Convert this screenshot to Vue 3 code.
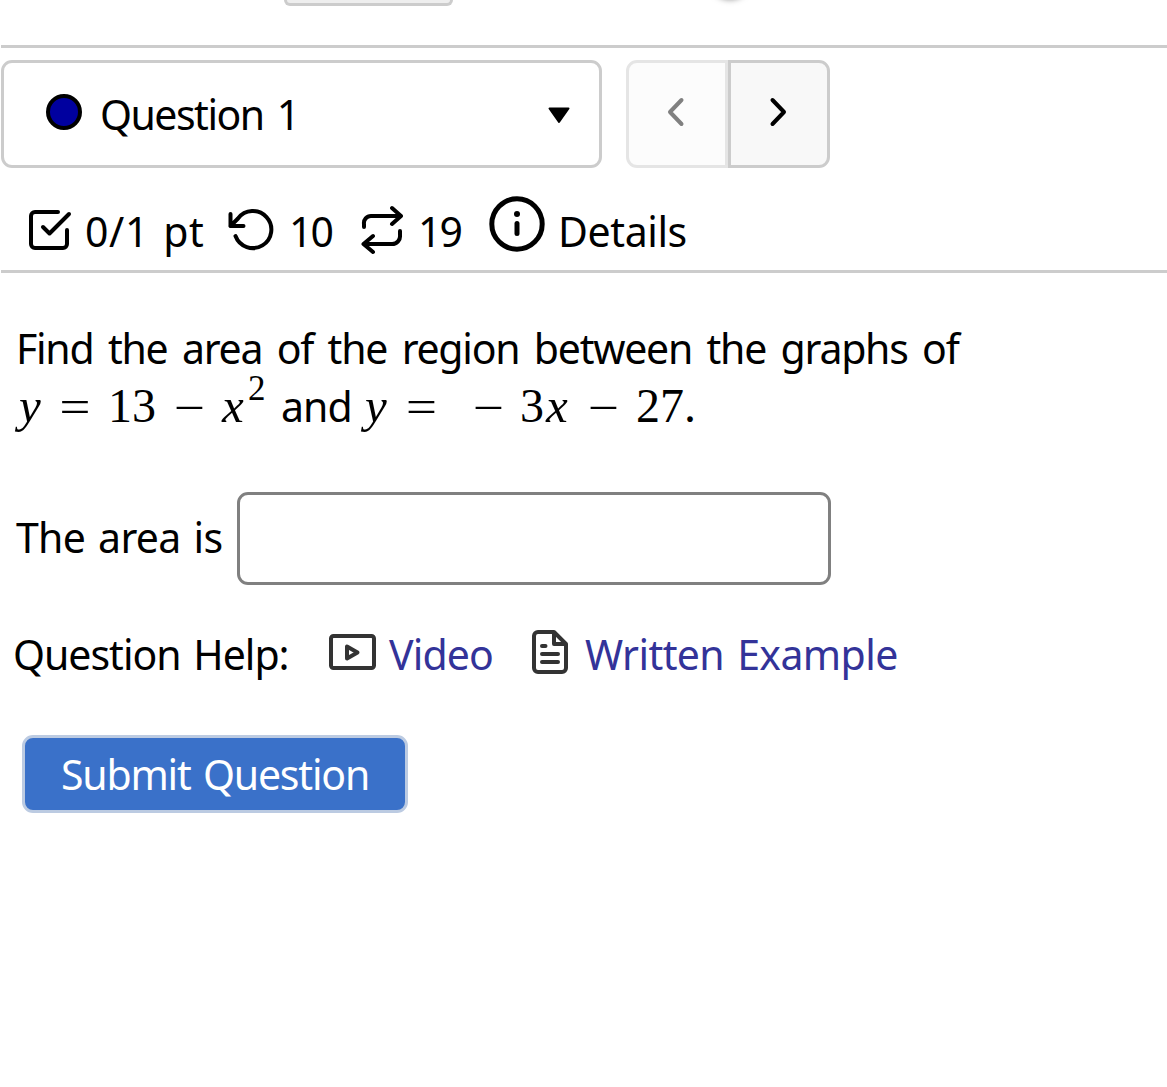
<template>
  <div class="page">
    <header class="top-strip">
      <div class="top-button"></div>
      <div class="top-knob"></div>
    </header>

    <nav class="question-nav">
      <button class="question-select">
        <span class="status-dot"></span>
        <span class="text select-label">Question 1</span>
        <svg class="caret" width="22" height="17" viewBox="0 0 22 17">
          <path d="M1.5 1.5h19L11 15z" fill="#000" stroke="#000" stroke-width="2" stroke-linejoin="round" />
        </svg>
      </button>
      <div class="pager">
        <button class="pager-button prev" disabled title="Previous">
          <svg width="20" height="30" viewBox="0 0 20 30">
            <path d="M15.5 3 4 15l11.500 12" />
          </svg>
        </button>
        <button class="pager-button next" title="Next">
          <svg width="20" height="30" viewBox="0 0 20 30">
            <path d="M4.500 3 16 15 4.500 27" />
          </svg>
        </button>
      </div>
    </nav>

    <section class="stats">
      <svg class="icon" width="44" height="42" viewBox="0 0 44 42">
        <path d="M30 3H7a4 4 0 0 0-4 4v28a4 4 0 0 0 4 4h28a4 4 0 0 0 4-4V21M15 18l6.500 6.500L41 5" />
      </svg>
      <span class="text score">0/1 pt</span>
      <svg class="icon" width="46" height="42" viewBox="0 0 46 42">
        <path d="M2.500 5v12h13M2.500 17 10 9.500A18.500 18.500 0 1 1 7.500 27" />
      </svg>
      <span class="text attempts">10</span>
      <svg class="icon" width="42" height="50" viewBox="0 0 42 50">
        <path d="M3 22v-3a7 7 0 0 1 7-8h30M31 3 40 11l-9 8M39 26v4a8 8 0 0 1-8 9H2.500M12 31l-9.500 8L12 47" />
      </svg>
      <span class="text versions">19</span>
      <svg class="icon info" width="56" height="56" viewBox="0 0 56 56">
        <circle cx="28" cy="28" r="25.200" />
        <path d="M28 27.500v10" />
        <circle class="info-dot" cx="28" cy="18" r="3" />
      </svg>
      <span class="text details">Details</span>
    </section>

    <main class="question">
      <p class="text prompt">Find the area of the region between the graphs of</p>
      <p class="equation">
        <i class="y">y</i><span class="op eq">=</span><span class="n13">13</span><span class="op minus">−</span><i class="x">x</i><sup>2</sup><span class="text and">and</span><i class="y">y</i><span class="op eq2">=</span><span class="op neg">−</span><span class="n3">3</span><i class="x2">x</i><span class="op minus2">−</span><span class="n27">27.</span>
      </p>

      <div class="answer">
        <label class="text answer-label" for="area">The area is</label>
        <input id="area" v-model="answer" type="text" />
      </div>

      <div class="help">
        <span class="text help-label">Question Help:</span>
        <svg class="icon help-icon" width="48" height="38" viewBox="0 0 48 38">
          <rect x="3" y="3" width="43" height="32" rx="2.500" />
          <path d="M19 13.500v12l10.500-6z" />
        </svg>
        <a class="text video">Video</a>
        <svg class="icon help-icon" width="38" height="46" viewBox="0 0 38 46">
          <path d="M23 3H7a4 4 0 0 0-4 4v32a4 4 0 0 0 4 4h24a4 4 0 0 0 4-4V15zM23 3v12h12M11 17h3.500M11 25h16M11 33h16" />
        </svg>
        <a class="text written">Written Example</a>
      </div>

      <button class="submit"><span class="text">Submit Question</span></button>
    </main>
  </div>
</template>

<script setup>
import { ref } from 'vue'

const answer = ref('')
</script>

<style>
body {
  margin: 0;
  background: #fff;
}
</style>

<style scoped>
* {
  box-sizing: border-box;
}

.page {
  height: 1087px;
  overflow: hidden;
  padding-left: 1px;
  color: #000;
}

button {
  margin: 0;
  padding: 0;
}

.text {
  font-family: "Noto Sans", sans-serif;
  font-size: 41px;
  line-height: 58px;
  letter-spacing: -0.9px;
  word-spacing: 3px;
  white-space: nowrap;
  flex: none;
}

.top-strip {
  display: flex;
  align-items: flex-start;
  height: 48px;
  padding-left: 283px;
  border-bottom: 3px solid #ccc;
}

.top-button {
  width: 169px;
  height: 6px;
  border: 3px solid #ccc;
  border-top: 0;
  border-radius: 0 0 10px 10px;
  background: #eee;
}

.top-knob {
  width: 40px;
  height: 40px;
  margin: -42px 0 0 257px;
  border-radius: 50%;
  box-shadow: 0 1px 6px rgba(0, 0, 0, 0.5);
}

.question-nav {
  display: flex;
  gap: 24px;
  margin-top: 12px;
  height: 108px;
}

.question-select {
  display: flex;
  align-items: center;
  width: 601px;
  padding: 0 29px 3px 42px;
  border: 3px solid #ccc;
  border-radius: 11px;
  background: #fff;
}

.status-dot {
  width: 36px;
  height: 36px;
  margin-bottom: 2px;
  border: 4px solid #000;
  border-radius: 50%;
  background: #00009f;
}

.select-label {
  margin: 3px 0 0 18px;
  letter-spacing: -1.5px;
  word-spacing: 4px;
}

.caret {
  margin: 5px 0 0 auto;
}

.pager {
  display: flex;
}

.pager-button {
  display: flex;
  align-items: center;
  justify-content: center;
  width: 102px;
  border: 3px solid #ccc;
  background: #f8f8f8;
}

.pager-button svg {
  fill: none;
  stroke: #000;
  stroke-width: 4;
  stroke-linecap: round;
  stroke-linejoin: round;
  margin: 0 2px 4px 0;
}

.prev {
  border-color: #e5e5e5;
  border-radius: 11px 0 0 11px;
  background: #fcfcfc;
}

.prev svg {
  stroke: #808080;
}

.next {
  border-radius: 0 11px 11px 0;
}

.stats {
  display: flex;
  align-items: center;
  height: 105px;
  padding: 20px 0 0 27px;
  border-bottom: 3px solid #ccc;
}

.stats .text {
  margin-top: 3px;
}

.icon {
  flex: none;
  fill: none;
  stroke: #000;
  stroke-width: 4;
  stroke-linecap: round;
  stroke-linejoin: round;
}

.stats .icon {
  margin-top: 1px;
}

.score {
  width: 143px;
  margin-left: 13px;
  letter-spacing: 0.6px;
}

.attempts,
.versions {
  width: 72px;
  margin-left: 15px;
  letter-spacing: -2px;
}

.versions {
  width: 71px;
}

.info {
  margin-bottom: 12px;
  stroke-width: 5;
}

.info-dot {
  fill: #000;
  stroke: none;
}

.details {
  margin-left: 13px;
  letter-spacing: -0.4px;
}

.question {
  padding: 46px 0 0 15px;
}

p {
  margin: 0;
}

.prompt {
  letter-spacing: -1.25px;
  word-spacing: 5.1px;
}

.equation {
  display: flex;
  align-items: baseline;
  height: 57px;
  margin-top: -1px;
  font-family: "Liberation Serif", serif;
  font-size: 48px;
  line-height: 58px;
}

.equation i {
  font-size: 49px;
}

/* thin operators keep the math light next to the serif digits */
.op {
  display: flex;
  justify-content: center;
  width: 31px;
  font-family: "Lato", sans-serif;
  font-weight: 300;
  font-size: 62px;
  line-height: 44px;
  transform: translateY(6px);
}

.equation .y {
  width: 41px;
  padding-left: 3px;
}

.eq {
  width: 36px;
  margin-right: 15px;
}

.eq2 {
  width: 37px;
}

.n13 {
  width: 48px;
}

.minus {
  margin-left: 18px;
}

.x {
  width: 26px;
  margin-left: 17px;
}

sup {
  width: 32px;
  font-size: 35px;
  line-height: 36px;
  transform: translateY(-22px);
}

.and {
  width: 82px;
  padding-left: 1px;
}

.neg {
  margin-left: 33px;
}

.n3 {
  width: 24px;
  margin-left: 16px;
}

.x2 {
  width: 26px;
  margin-left: 2px;
}

.minus2 {
  margin-left: 16px;
}

.n27 {
  margin-left: 17px;
}

.answer {
  display: flex;
  align-items: center;
  height: 93px;
  margin-top: 59px;
}

.answer-label {
  width: 221px;
  margin-bottom: 3px;
  letter-spacing: -0.7px;
}

input {
  width: 594px;
  height: 93px;
  padding: 0 12px;
  border: 3px solid #808080;
  border-radius: 11px;
  background: #fff;
  outline: none;
  font: 41px "Noto Sans", sans-serif;
}

.help {
  display: flex;
  align-items: center;
  height: 58px;
  margin: 38px 0 0 -3px;
}

.help .text {
  margin-top: 4px;
}

.help-label {
  width: 315px;
  letter-spacing: -1px;
}

.help-icon {
  stroke: #333;
}

.video {
  width: 142px;
  margin-left: 13px;
}

.written {
  margin-left: 16px;
  letter-spacing: -0.6px;
}

.help a {
  color: #339;
}

.submit {
  display: flex;
  align-items: center;
  justify-content: center;
  width: 386px;
  height: 78px;
  margin: 54px 0 0 6px;
  border: 3px solid #bccbe2;
  border-radius: 11px;
  background: #3a71c9;
  color: #fff;
}

.submit .text {
  letter-spacing: -1.2px;
}
</style>
